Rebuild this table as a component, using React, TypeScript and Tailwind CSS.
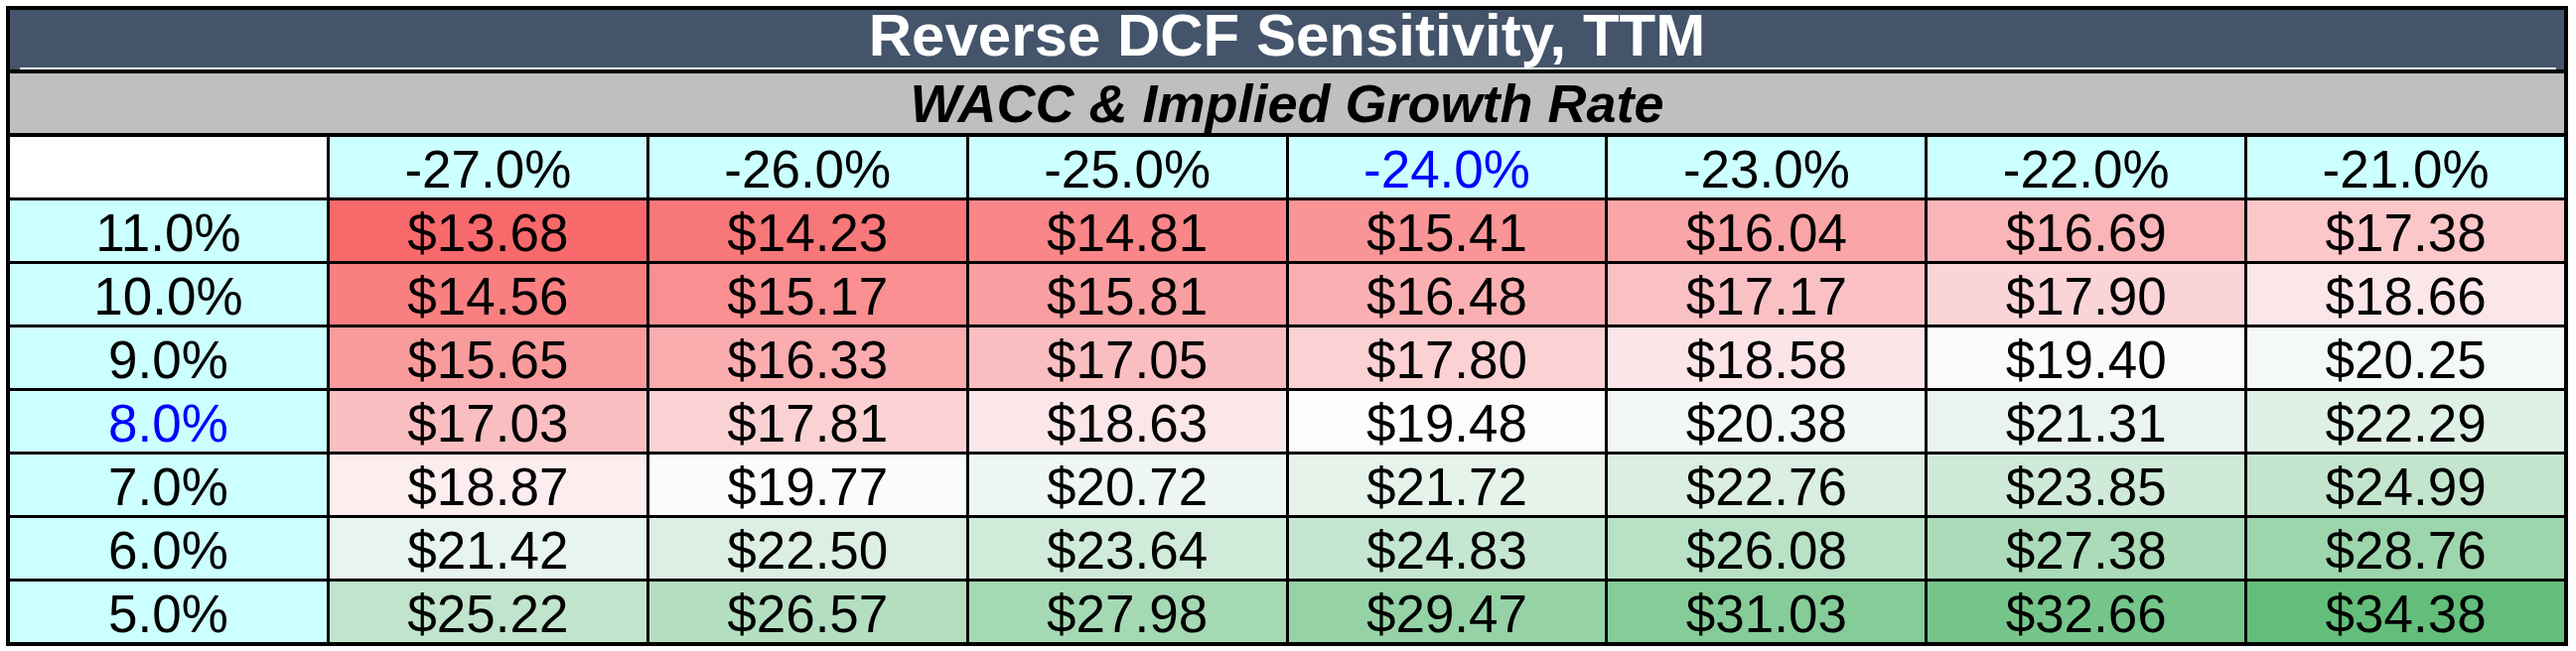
const growthRates = [-27, -26, -25, -24, -23, -22, -21]
const waccRates = [11, 10, 9, 8, 7, 6, 5]

const prices: number[][] = [
  [13.68, 14.23, 14.81, 15.41, 16.04, 16.69, 17.38],
  [14.56, 15.17, 15.81, 16.48, 17.17, 17.9, 18.66],
  [15.65, 16.33, 17.05, 17.8, 18.58, 19.4, 20.25],
  [17.03, 17.81, 18.63, 19.48, 20.38, 21.31, 22.29],
  [18.87, 19.77, 20.72, 21.72, 22.76, 23.85, 24.99],
  [21.42, 22.5, 23.64, 24.83, 26.08, 27.38, 28.76],
  [25.22, 26.57, 27.98, 29.47, 31.03, 32.66, 34.38],
]

// base case highlighted in blue
const baseGrowth = -24
const baseWacc = 8

type Rgb = [number, number, number]

const RED: Rgb = [248, 105, 107]
const WHITE: Rgb = [252, 252, 255]
const GREEN: Rgb = [99, 190, 123]

function mix(a: Rgb, b: Rgb, t: number): string {
  const c = a.map((v, i) => Math.round(v + (b[i] - v) * t))
  return `rgb(${c[0]}, ${c[1]}, ${c[2]})`
}

const sorted = prices.flat().sort((a, b) => a - b)
const minValue = sorted[0]
const maxValue = sorted[sorted.length - 1]
const midValue = sorted[Math.floor(sorted.length / 2)]

function scaleColor(value: number): string {
  if (value <= midValue) {
    return mix(RED, WHITE, (value - minValue) / (midValue - minValue))
  }
  return mix(WHITE, GREEN, (value - midValue) / (maxValue - midValue))
}

const pct = (n: number) => `${n.toFixed(1)}%`

export default function App() {
  return (
    <div className="min-h-screen bg-white pl-[6px] pt-[6px] font-['Liberation_Sans',Arial,sans-serif]">
      <div className="w-[2580px] border-4 border-black bg-black">
        <div className="flex h-[58px] items-center justify-center bg-[#44546a] pb-[6px] text-[60px] font-bold leading-none text-white">
          Reverse DCF Sensitivity, TTM
        </div>
        <div className="h-[2px] bg-[#44546a] pl-[10px] pr-[8px]">
          <div className="h-full bg-white" />
        </div>
        <div className="h-[4px] bg-black" />
        <div className="flex h-[60px] items-center justify-center bg-[#bfbfbf] text-[54px] font-bold italic leading-none text-black">
          WACC &amp; Implied Growth Rate
        </div>
        <div className="h-[4px] bg-black" />

        <div className="grid grid-cols-[319px_repeat(7,minmax(0,1fr))] gap-[3px] bg-black text-[53px] leading-none">
          <div className="h-[61px] bg-white" />
          {growthRates.map((g) => (
            <div
              key={g}
              className={`flex h-[61px] items-center justify-center bg-[#ccffff] pt-[4px] ${
                g === baseGrowth ? "text-[#0000ff]" : "text-black"
              }`}
            >
              {pct(g)}
            </div>
          ))}

          {waccRates.map((w, r) => (
            <div key={w} className="contents">
              <div
                className={`flex h-[61px] items-center justify-center bg-[#ccffff] pt-[4px] ${
                  w === baseWacc ? "text-[#0000ff]" : "text-black"
                }`}
              >
                {pct(w)}
              </div>
              {prices[r].map((p, c) => (
                <div
                  key={c}
                  className="flex h-[61px] items-center justify-center pt-[4px] text-black"
                  style={{ backgroundColor: scaleColor(p) }}
                >
                  ${p.toFixed(2)}
                </div>
              ))}
            </div>
          ))}
        </div>
      </div>
    </div>
  )
}
